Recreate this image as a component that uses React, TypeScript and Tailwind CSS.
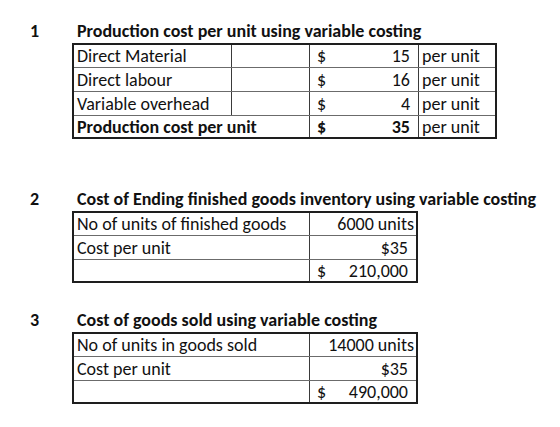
import React from "react";

type Cell = { text?: string; cls: string; money?: boolean };

function Row({ cells, first, last, bold }: { cells: Cell[]; first?: boolean; last?: boolean; bold?: boolean }) {
  const h = first ? "h-[22px]" : last ? "h-[22px] border-t border-[#6b6b6b]" : "h-[24px] border-t border-[#6b6b6b]";
  return (
    <div className={`flex ${h} ${bold ? "font-bold" : ""}`}>
      {cells.map((c, i) => (
        <div key={i} className={`flex items-center leading-none whitespace-nowrap ${i > 0 ? "border-l border-[#3a3a3a]" : ""} ${c.cls}`}>
          {c.money ? (
            <div className="flex w-full justify-between">
              <span>$</span>
              <span>{c.text}</span>
            </div>
          ) : (
            c.text
          )}
        </div>
      ))}
    </div>
  );
}

function Section({ num, title, className, children }: { num: string; title: string; className?: string; children: React.ReactNode }) {
  return (
    <div className={`flex ${className ?? ""}`}>
      <div className="w-[42px] h-5 leading-4 font-bold">{num}</div>
      <div>
        <div className="h-5 leading-4 font-bold pl-[5px] whitespace-nowrap">{title}</div>
        {children}
      </div>
    </div>
  );
}

export default function App() {
  const c1 = "w-[157px] pl-[3px]";
  const c2 = "w-[78px]";
  const c3 = "w-[109px] pl-[7px] pr-[8px]";
  const c4 = "w-[77px] pl-[3px]";
  const wide = "w-[235px] pl-[3px]";

  return (
    <div className="w-[560px] h-[427px] bg-white text-[#111] text-[18px] font-[Carlito,Lato,sans-serif] pl-[30px] pt-[23px]">
      <Section num="1" title="Production cost per unit using variable costing">
        <div className="w-[425px] border-2 border-[#1e1e1e]">
          <Row first cells={[{ text: "Direct Material", cls: c1 }, { cls: c2 }, { text: "15", cls: c3, money: true }, { text: "per unit", cls: c4 }]} />
          <Row cells={[{ text: "Direct labour", cls: c1 }, { cls: c2 }, { text: "16", cls: c3, money: true }, { text: "per unit", cls: c4 }]} />
          <Row cells={[{ text: "Variable overhead", cls: c1 }, { cls: c2 }, { text: "4", cls: c3, money: true }, { text: "per unit", cls: c4 }]} />
          <Row last bold cells={[{ text: "Production cost per unit", cls: wide }, { text: "35", cls: c3, money: true }, { text: "per unit", cls: `${c4} font-normal` }]} />
        </div>
      </Section>

      <Section num="2" title="Cost of Ending finished goods inventory using variable costing" className="mt-[52px]">
        <div className="w-[346px] border-2 border-[#1e1e1e]">
          <Row first cells={[{ text: "No of units of finished goods", cls: wide }, { text: "6000 units", cls: "w-[107px] justify-end pr-[2px]" }]} />
          <Row cells={[{ text: "Cost per unit", cls: wide }, { text: "$35", cls: "w-[107px] justify-end pr-[8px]" }]} />
          <Row last cells={[{ cls: wide }, { text: "210,000", cls: "w-[107px] pl-[7px] pr-[8px]", money: true }]} />
        </div>
      </Section>

      <Section num="3" title="Cost of goods sold using variable costing" className="mt-[29px]">
        <div className="w-[346px] border-2 border-[#1e1e1e]">
          <Row first cells={[{ text: "No of units in goods sold", cls: wide }, { text: "14000 units", cls: "w-[107px] justify-end pr-[2px]" }]} />
          <Row cells={[{ text: "Cost per unit", cls: wide }, { text: "$35", cls: "w-[107px] justify-end pr-[8px]" }]} />
          <Row last cells={[{ cls: wide }, { text: "490,000", cls: "w-[107px] pl-[7px] pr-[8px]", money: true }]} />
        </div>
      </Section>
    </div>
  );
}
